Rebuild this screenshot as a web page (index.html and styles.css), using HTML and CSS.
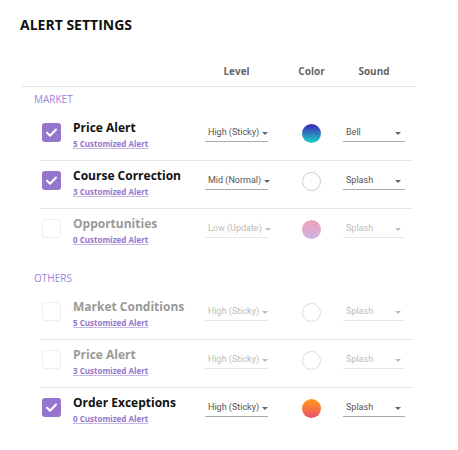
FILE: index.html
```html
<!DOCTYPE html>
<html>
<head>
<meta charset="utf-8">
<link rel="stylesheet" href="styles.css">
</head>
<body>
<div class="page">
  <h1 class="title">ALERT SETTINGS</h1>
  <div class="table">
    <div class="head grid">
      <div></div>
      <div class="hcell hlevel">Level</div>
      <div class="hcell hcolor">Color</div>
      <div class="hcell hsound">Sound</div>
    </div>

    <div class="section">MARKET</div>
    <div class="row grid">
      <div class="name"><span class="cb on"><svg viewBox="0 0 19 19" width="19" height="19"><path d="M5 9.8l3 3 6-6.3" fill="none" stroke="#fff" stroke-width="2" stroke-linecap="round" stroke-linejoin="round"/></svg></span><div class="txt"><div class="nm">Price Alert</div><a class="lnk">5 Customized Alert</a></div></div>
      <div class="sel lvl"><span>High (Sticky)</span><i class="arr"></i></div>
      <div class="colorc"><span class="dot g1"></span></div>
      <div class="sel snd"><span>Bell</span><i class="arr"></i></div>
    </div>
    <div class="row grid">
      <div class="name"><span class="cb on"><svg viewBox="0 0 19 19" width="19" height="19"><path d="M5 9.8l3 3 6-6.3" fill="none" stroke="#fff" stroke-width="2" stroke-linecap="round" stroke-linejoin="round"/></svg></span><div class="txt"><div class="nm">Course Correction</div><a class="lnk">3 Customized Alert</a></div></div>
      <div class="sel lvl"><span>Mid (Normal)</span><i class="arr"></i></div>
      <div class="colorc"><span class="dot empty"></span></div>
      <div class="sel snd"><span>Splash</span><i class="arr"></i></div>
    </div>
    <div class="row grid last off">
      <div class="name"><span class="cb"></span><div class="txt"><div class="nm">Opportunities</div><a class="lnk">0 Customized Alert</a></div></div>
      <div class="sel lvl"><span>Low (Update)</span><i class="arr"></i></div>
      <div class="colorc"><span class="dot g2"></span></div>
      <div class="sel snd"><span>Splash</span><i class="arr"></i></div>
    </div>

    <div class="section s2">OTHERS</div>
    <div class="row grid off">
      <div class="name"><span class="cb"></span><div class="txt"><div class="nm">Market Conditions</div><a class="lnk">5 Customized Alert</a></div></div>
      <div class="sel lvl"><span>High (Sticky)</span><i class="arr"></i></div>
      <div class="colorc"><span class="dot empty"></span></div>
      <div class="sel snd"><span>Splash</span><i class="arr"></i></div>
    </div>
    <div class="row grid off">
      <div class="name"><span class="cb"></span><div class="txt"><div class="nm">Price Alert</div><a class="lnk">3 Customized Alert</a></div></div>
      <div class="sel lvl"><span>High (Sticky)</span><i class="arr"></i></div>
      <div class="colorc"><span class="dot empty"></span></div>
      <div class="sel snd"><span>Splash</span><i class="arr"></i></div>
    </div>
    <div class="row grid last">
      <div class="name"><span class="cb on"><svg viewBox="0 0 19 19" width="19" height="19"><path d="M5 9.8l3 3 6-6.3" fill="none" stroke="#fff" stroke-width="2" stroke-linecap="round" stroke-linejoin="round"/></svg></span><div class="txt"><div class="nm">Order Exceptions</div><a class="lnk">0 Customized Alert</a></div></div>
      <div class="sel lvl"><span>High (Sticky)</span><i class="arr"></i></div>
      <div class="colorc"><span class="dot g3"></span></div>
      <div class="sel snd"><span>Splash</span><i class="arr"></i></div>
    </div>
  </div>
</div>
</body>
</html>
```

FILE: styles.css
```css
* { box-sizing: border-box; }
html, body { margin: 0; padding: 0; background: #fff; }
body { font-family: "Open Sans", "Liberation Sans", sans-serif; color: #1a1a1a; }
.page { padding: 15px 0 0 20px; }
.title { margin: 0; font-size: 14px; line-height: 20px; font-weight: 700; color: #111; letter-spacing: 0; }
.table { margin: 29px 0 0 2px; width: 393px; }
.grid { display: grid; grid-template-columns: 165px 97px 41px 62px; }
.head { padding: 0 0 8px 18px; border-bottom: 1px solid #e3e3e3; }
.hcell { font-size: 10px; line-height: 14px; font-weight: 700; color: #666; display: flex; justify-content: center; white-space: nowrap; }
.hlevel { width: 63px; }
.hcolor { width: 19px; }
.hsound { width: 62px; }
.section { margin: 5px 0 7px 12px; font-size: 10px; line-height: 14px; color: #9e82d8; }
.s2 { margin-top: 14px; }
.row { margin: 0 2px 0 18px; padding: 7px 0 11px; border-bottom: 1px solid #e6e6e6; }
.row.last { border-bottom: 0; padding-bottom: 12px; }
.name { display: flex; align-items: flex-start; padding-left: 2px; }
.cb { flex: none; width: 19px; height: 19px; margin-top: 3px; margin-right: 12px; border-radius: 3px; border: 1px solid #eee; background: #fff; display: block; }
.cb.on { background: #9575cd; border: 0; }
.cb svg { display: block; }
.txt { display: flex; flex-direction: column; }
.nm { font-size: 12px; line-height: 15px; font-weight: 700; color: #111; white-space: nowrap; }
.off .nm { color: #999; }
.lnk { margin-top: 4px; font-size: 8px; line-height: 10px; font-weight: 700; color: #9575cd; text-decoration: underline; text-decoration-color: #c8b8ea; white-space: nowrap; }
.sel { margin-top: 4px; height: 18px; display: flex; align-items: center; justify-content: space-between; border-bottom: 1px solid #aaa; font-family: Roboto, "Liberation Sans", sans-serif; font-size: 9px; line-height: 17px; color: #555; padding-left: 3px; white-space: nowrap; }
.lvl { width: 63px; padding-right: 2px; }
.snd { width: 62px; padding-right: 4px; }
.off .sel { color: #bbb; border-bottom-color: #e8e8e8; }
.arr { display: block; width: 0; height: 0; border-left: 3px solid transparent; border-right: 3px solid transparent; border-top: 3.5px solid #666; margin-top: 1px; margin-left: 3px; }
.off .arr { border-top-color: #bbb; }
.colorc { padding-top: 4px; }
.dot { display: block; width: 19px; height: 19px; border-radius: 50%; }
.empty { border: 1px solid #ccc; background: #fff; }
.off .empty { border-color: #ddd; }
.g1 { background: linear-gradient(to bottom, #3a23b0, #1fd3cc); }
.g2 { background: linear-gradient(to bottom, #f4a1b6, #c9b2e4); }
.g3 { background: linear-gradient(to bottom, #ff9d14, #ee4f6e); }
```
